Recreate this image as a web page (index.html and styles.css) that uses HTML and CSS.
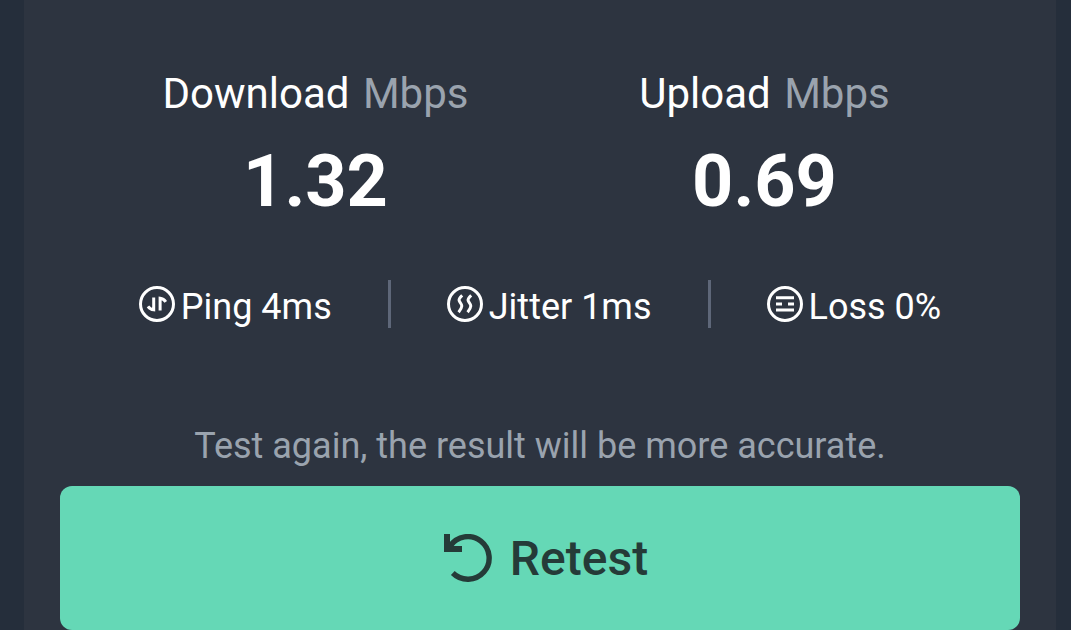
FILE: index.html
```
<!DOCTYPE html>
<html lang="en">
<head>
    <meta charset="UTF-8">
    <meta name="viewport" content="width=device-width, initial-scale=1.0">
    <title>Speed Test Result</title>
    <link rel="stylesheet" href="styles.css">
</head>
<body>
    <main class="result-card">
        <section class="speeds">
            <div class="speed">
                <h2 class="speed-label">Download <span class="unit">Mbps</span></h2>
                <div class="speed-value">1.32</div>
            </div>
            <div class="speed">
                <h2 class="speed-label">Upload <span class="unit">Mbps</span></h2>
                <div class="speed-value">0.69</div>
            </div>
        </section>

        <ul class="stats">
            <li class="stat">
                <svg class="stat-icon" viewBox="0 0 36 36" aria-hidden="true">
                    <circle cx="18" cy="18" r="16.5" />
                    <path d="M14.700 11.500v12.300q-3.600-.4-5.700-3.500M21.100 24.600V12.300q3.600.4 5.700 3.500" />
                </svg>
                <span>Ping 4ms</span>
            </li>
            <li class="stat">
                <svg class="stat-icon" viewBox="0 0 36 36" aria-hidden="true">
                    <circle cx="18" cy="18" r="16.5" />
                    <path d="M15.200 9.400c-2.200 2-3.400 3.500-3.100 5 .4 2 2.800 3.400 2.700 5.600-.1 2-1.300 4-3.200 6.200M24.200 9.400c-2.200 2-3.400 3.500-3.100 5 .4 2 2.800 3.400 2.700 5.600-.1 2-1.300 4-3.200 6.200" />
                </svg>
                <span>Jitter 1ms</span>
            </li>
            <li class="stat">
                <svg class="stat-icon" viewBox="0 0 36 36" aria-hidden="true">
                    <circle cx="18" cy="18" r="16.5" />
                    <path d="M9 11.800h18M9 17.900h6M21 17.900h6M9 24h18" />
                </svg>
                <span>Loss 0%</span>
            </li>
        </ul>

        <p class="hint">Test again, the result will be more accurate.</p>
        <button type="button" class="retest">
            <svg class="retest-icon" viewBox="0 0 48 48" aria-hidden="true">
                <path class="arc" d="M6.200 12A21.300 21.300 0 1 1 8.800 39" />
                <path class="head" d="M0 0h6v9l3 3h9v6H0z" />
            </svg>
            <span>Retest</span>
        </button>
    </main>
</body>
</html>
```

FILE: styles.css
```
body, html {
    margin: 0;
    padding: 0;
    font-family: Roboto, sans-serif;
    background-color: #252e3b;
}

.result-card {
    box-sizing: border-box;
    min-height: 100vh;
    margin: 0 15px 0 24px;
    padding: 69px 36px 0;
    background-color: #2d3440;
    color: #ffffff;
}

.speeds {
    display: grid;
    grid-template-columns: 1fr 1fr;
    padding: 0 31px;
    text-align: center;
}

.speed-label {
    margin: 0 0 21px;
    font-size: 42px;
    font-weight: 400;
    line-height: 50px;
}

.unit {
    margin-left: 3px;
    color: #9aa3ae;
}

.speed-value {
    font-size: 72px;
    font-weight: 700;
    line-height: 84px;
}

.stats {
    display: flex;
    justify-content: center;
    gap: 56px;
    margin: 56px 0 0;
    padding: 0;
    list-style: none;
    font-size: 36px;
    line-height: 42px;
}

.stat {
    display: flex;
    align-items: flex-start;
    gap: 6px;
    padding-top: 6px;
}

.stat + .stat::before {
    content: "";
    width: 3px;
    height: 48px;
    margin: -6px 50px 0 0;
    background-color: #5e6779;
}

.stat-icon {
    width: 36px;
    height: 36px;
    fill: none;
    stroke: #ffffff;
    stroke-width: 3;
}

.hint {
    margin: 97px 0 19px;
    color: #9aa3ae;
    font-size: 36px;
    line-height: 42px;
    text-align: center;
}

.retest {
    display: flex;
    justify-content: center;
    align-items: center;
    gap: 18px;
    width: 100%;
    height: 144px;
    padding: 0 0 0 12px;
    border: none;
    border-radius: 12px;
    background-color: #65d8b6;
    color: #253b38;
    font-family: inherit;
    font-size: 48px;
    font-weight: 500;
    cursor: pointer;
}

.retest-icon {
    width: 48px;
    height: 48px;
}

.retest-icon .arc {
    fill: none;
    stroke: currentColor;
    stroke-width: 5.400;
}

.retest-icon .head {
    fill: currentColor;
}
```
